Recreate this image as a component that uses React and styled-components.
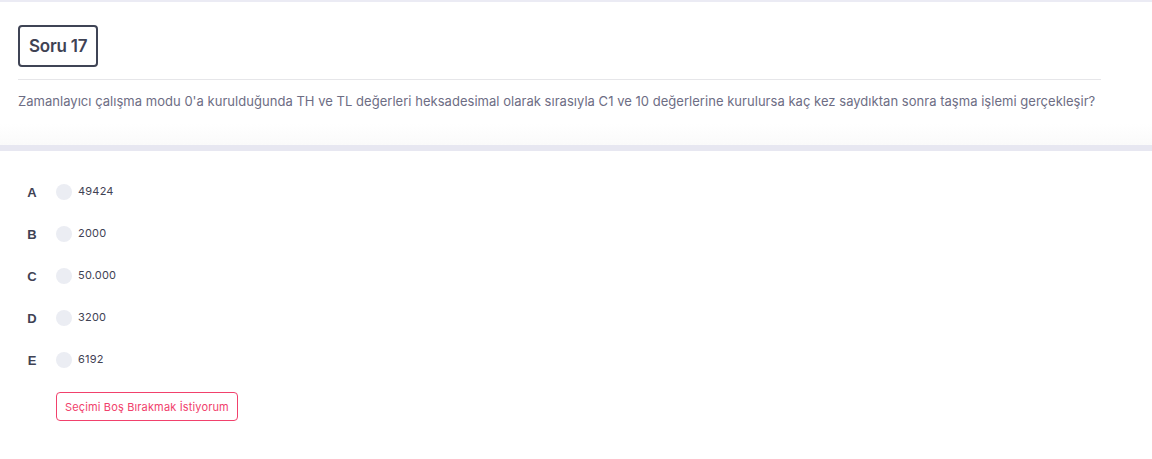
import React, { useState } from 'react';
import styled, { createGlobalStyle } from 'styled-components';

const GlobalStyle = createGlobalStyle`
  body {
    margin: 0;
    background: #ffffff;
    font-family: 'Inter', 'Noto Sans', sans-serif;
  }
`;

const Page = styled.div`
  width: 1152px;
  border-top: 2px solid #ebebf4;
`;

const QuestionCard = styled.div`
  padding: 23px 51px 34px 18px;
  background: linear-gradient(#ffffff 85%, #fafafa 100%);
  border-bottom: 6px solid #e7e7f1;
`;

const TitleBox = styled.div`
  display: inline-flex;
  align-items: center;
  height: 42px;
  padding: 0 9px;
  box-sizing: border-box;
  border: 2px solid #3f4455;
  border-radius: 4px;
  font-size: 17px;
  font-weight: 600;
  color: #3f4254;
  letter-spacing: -0.2px;
`;

const Divider = styled.hr`
  margin: 12px 0 11px;
  border: 0;
  border-top: 1px solid #e6e6e9;
`;

const QuestionText = styled.p`
  margin: 0;
  font-size: 13px;
  line-height: 20px;
  letter-spacing: 0.03px;
  color: #6d6d84;
  white-space: nowrap;
`;

const Options = styled.div`
  padding: 20px 18px 0;
`;

const OptionRow = styled.label`
  display: flex;
  align-items: center;
  height: 42px;
  cursor: pointer;
`;

const Letter = styled.span`
  width: 28px;
  text-align: center;
  font-family: 'Liberation Sans', Arial, sans-serif;
  font-size: 13px;
  font-weight: 700;
  color: #3f4254;
  margin-top: 1px;
`;

const Radio = styled.span`
  width: 16px;
  height: 16px;
  margin-left: 10px;
  border-radius: 50%;
  background: ${p => (p.$checked ? '#3699ff' : '#ebedf3')};
`;

const Value = styled.span`
  margin-left: 6px;
  margin-top: -3px;
  font-size: 11px;
  letter-spacing: 0.2px;
  color: #3f4254;
`;

const SkipButton = styled.button`
  margin: 11px 0 0 38px;
  height: 29px;
  padding: 0 8px;
  background: #ffffff;
  border: 1px solid #f1416c;
  border-radius: 4px;
  font-family: 'Inter', 'Noto Sans', sans-serif;
  font-size: 11px;
  letter-spacing: 0.15px;
  color: #f1416c;
  cursor: pointer;
`;

const choices = [
  ['A', '49424'],
  ['B', '2000'],
  ['C', '50.000'],
  ['D', '3200'],
  ['E', '6192'],
];

export default function App() {
  const [picked, setPicked] = useState(null);

  return (
    <Page>
      <GlobalStyle />
      <QuestionCard>
        <TitleBox>Soru 17</TitleBox>
        <Divider />
        <QuestionText>
          Zamanlayıcı çalışma modu 0'a kurulduğunda TH ve TL değerleri heksadesimal olarak sırasıyla C1 ve 10
          değerlerine kurulursa kaç kez saydıktan sonra taşma işlemi gerçekleşir?
        </QuestionText>
      </QuestionCard>
      <Options>
        {choices.map(([letter, value]) => (
          <OptionRow key={letter} onClick={() => setPicked(letter)}>
            <Letter>{letter}</Letter>
            <Radio $checked={picked === letter} />
            <Value>{value}</Value>
          </OptionRow>
        ))}
        <SkipButton onClick={() => setPicked(null)}>Seçimi Boş Bırakmak İstiyorum</SkipButton>
      </Options>
    </Page>
  );
}
